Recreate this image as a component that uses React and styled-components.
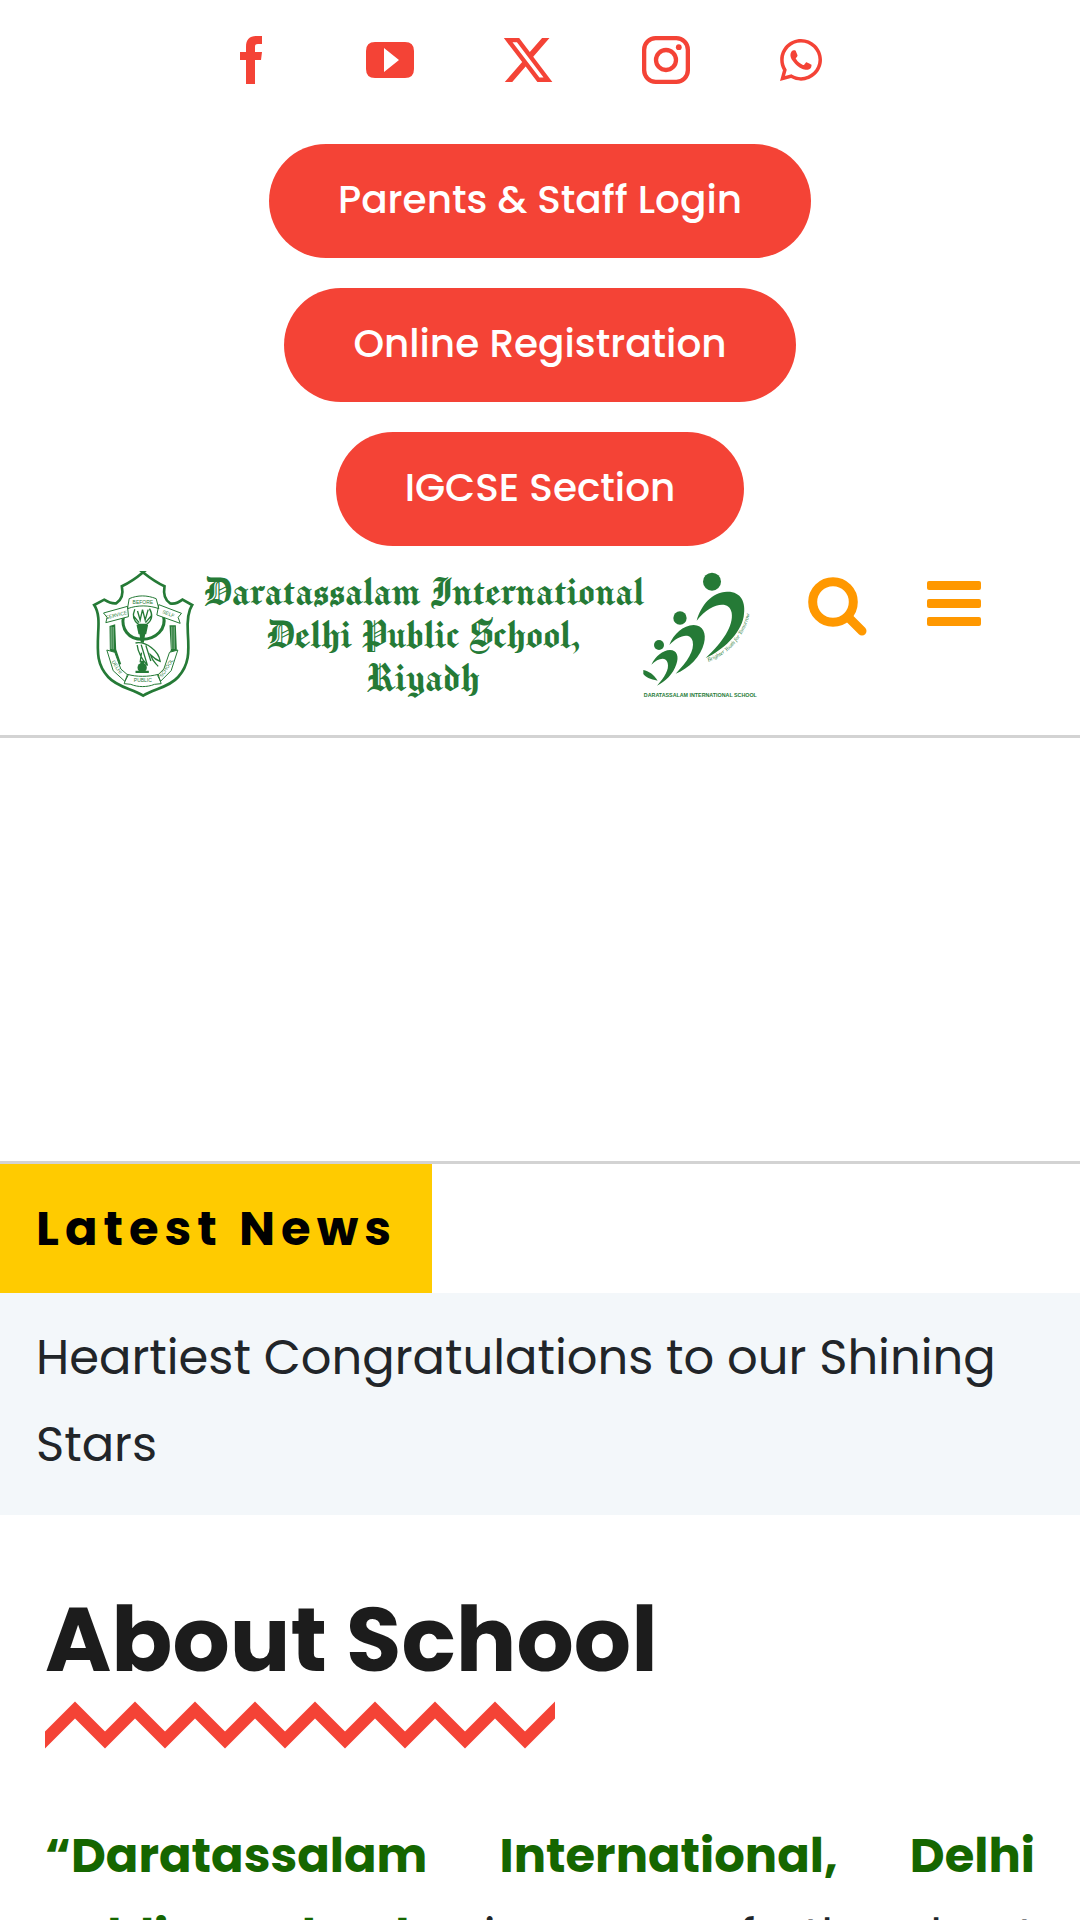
import React from "react";
import styled, { createGlobalStyle } from "styled-components";
import { FaWhatsapp } from "react-icons/fa";
import { FaXTwitter } from "react-icons/fa6";

const RED = "#f44336";
const GREEN = "#257a36";
const ORANGE = "#ff9800";

const GlobalStyle = createGlobalStyle`
  *, *::before, *::after { box-sizing: border-box; }
  html { overflow-x: hidden; }
  body {
    margin: 0;
    background: #fff;
    color: #212529;
    font-family: Poppins, Inter, "Open Sans", sans-serif;
    font-size: 48px;
  }
  a { color: inherit; text-decoration: none; }
  h1, h2, p, ul { margin: 0; padding: 0; }
  svg { display: block; flex: none; }
`;

const TopBar = styled.div`
  display: flex;
  flex-direction: column;
  align-items: center;
  gap: 60px;
  padding-top: 36px;
`;

const SocialList = styled.ul`
  display: flex;
  justify-content: center;
  gap: 90px;
  padding-right: 24px;
  list-style: none;
`;

const SocialLink = styled.a`
  display: flex;
  align-items: center;
  justify-content: ${({ $align = "center" }) => $align};
  width: 48px;
  height: 48px;
  color: ${RED};
`;

const WhatsAppIcon = styled(FaWhatsapp)`
  width: 42px;
  height: 48px;
`;

const ActionList = styled.nav`
  display: flex;
  flex-direction: column;
  align-items: center;
  gap: 30px;
`;

const ActionLink = styled.a`
  padding: 26px 69px 28px;
  border-radius: 57px;
  background: ${RED};
  color: #fff;
  font-size: 39px;
  font-weight: 500;
  line-height: 60px;
`;

const Header = styled.header`
  display: flex;
  align-items: flex-start;
  padding: 24px 99px 35px 92px;
  border-bottom: 3px solid #d3d3d3;
`;

const Brand = styled.a`
  display: flex;
  align-items: flex-start;
  flex: none;
  color: ${GREEN};
`;

const BrandName = styled.span`
  width: 447px;
  padding-left: 8px;
  font-family: "Manufacturing Consent", UnifrakturCook, "Liberation Serif", serif;
  font-size: 44px;
  font-weight: 400;
  line-height: 43px;
  text-align: center;
  white-space: nowrap;
`;

const HeaderTools = styled.div`
  display: flex;
  flex: 1;
  align-items: flex-start;
  justify-content: flex-end;
  gap: 60px;
  padding-top: 7px;
`;

const IconButton = styled.button`
  display: block;
  padding: 0;
  border: 0;
  background: none;
  color: ${ORANGE};
  cursor: pointer;
`;

const Banner = styled.section`
  height: 426px;
  border-bottom: 3px solid #d3d3d3;
`;

const News = styled.section`
  background: #f3f7fa;
`;

const NewsHead = styled.div`
  background: #fff;
`;

const NewsTitle = styled.h2`
  width: 40%;
  padding: 21px 0 21px 36px;
  background: #ffcb00;
  color: #000;
  font-size: 48px;
  font-weight: 700;
  letter-spacing: 6px;
  line-height: 87px;
  white-space: nowrap;
`;

const NewsText = styled.p`
  padding: 21px 36px 27px;
  line-height: 87px;
`;

const About = styled.main`
  padding: 75px 45px;
`;

const AboutTitle = styled.h1`
  color: #1c1c1c;
  font-size: 90px;
  font-weight: 700;
  line-height: 99px;
`;

const ZigZag = styled.svg`
  margin: 12px 0 66px;
`;

const AboutText = styled.p`
  line-height: 81px;
  text-align: justify;

  strong { color: #156600; font-weight: 700; }
`;

function FacebookIcon() {
  return (
    <svg width="24" height="48" viewBox="0 0 24 48" fill="currentColor" aria-hidden="true">
      <path d="M6 48V24H0v-8h6v-5C6 3.500 9.500 0 16 0h6v8h-4c-2.600 0-3 1-3 3v5h7l-1 8h-6v24z" />
    </svg>
  );
}

function YouTubeIcon() {
  return (
    <svg width="48" height="36" viewBox="0 0 48 36" fill="currentColor" aria-hidden="true">
      <path fillRule="evenodd" d="M9 0h30q9 0 9 9v18q0 9-9 9H9q-9 0-9-9V9q0-9 9-9zm9 6v24l15-12z" />
    </svg>
  );
}

function InstagramIcon() {
  return (
    <svg width="48" height="48" viewBox="0 0 48 48" fill="none" stroke="currentColor" strokeWidth="4.300" aria-hidden="true">
      <rect x="2.150" y="2.150" width="43.700" height="43.700" rx="11.500" />
      <circle cx="24" cy="24" r="10" />
      <circle cx="36.800" cy="11.200" r="2.900" fill="currentColor" stroke="none" />
    </svg>
  );
}

function Crest() {
  return (
    <svg width="103" height="128" viewBox="36 28 308 384" fill="none" stroke={GREEN} aria-hidden="true">
      <path strokeWidth="8" d="M189 35C170 51 149 66 125 77c5 24-2 42-17 51-13 2-23-3-36-11L42 133c15 22 14 52 12 84-3 62-3 96 30 132 29 32 73 35 105 56 32-21 77-24 105-56 33-37 33-73 29-132-2-32-2-62 13-84l-29-16c-13 10-25 14-37 11-15-9-21-27-17-51-24-11-45-26-65-42z" />
      <path strokeWidth="9" d="M130 166c-8 39 15 70 56 70s74-31 64-70" />
      <path strokeWidth="3" fill="#fff" d="M147 114c26-11 53-11 81 0l8 30c-30-11-64-11-94 0zM142 137l-72 20 11 13-4 16 68-18zM236 132l68 26-10 12 6 18-70-25z" />
      <path strokeWidth="4" d="M164 146c-10 23-3 35 11 45h25c16-12 20-26 8-47M172 151l8 27 7-31 8 31 9-31M160 166l17 20M213 166l-17 20" />
      <path fill={GREEN} stroke="none" d="M169 192h35l-6 29h-23zM178 221h17l-4 25h-9zM88 196l17-5 3 75 15 44-14 6-20-48zM268 194h19l3 75-21 48-12-7 15-43z" />
      <path strokeWidth="3" d="M93 198v67M99 199v67M275 198v67M282 198v67" stroke="#8ebc96" />
      <path strokeWidth="4" d="M166 247c31-6 70 23 74 55-14-5-20-11-29-20 5 19 14 24 23 35M171 253c3 29 18 47 31 62M183 252l19 63M197 254l15 47M184 276l-4 29" />
      <circle cx="186" cy="321" r="14" fill={GREEN} stroke="none" />
      <path fill={GREEN} stroke="none" d="M181 300h11v16h-11zM166 330h40v7h-40z" />
      <path strokeWidth="3" fill="#fff" d="M80 268l24 7 18 50 22 19-10 18-35-32zM293 268l-25 7-17 50-19 19 9 18 32-32zM142 341c27 8 62 8 92 0l9 28-20 2c-22 9-50 9-71 0l-20-2z" />
      <g fill={GREEN} stroke="none" fontFamily="Liberation Sans, sans-serif" fontSize="15" textAnchor="middle">
        <text x="188" y="130">BEFORE</text>
        <text x="110" y="168" transform="rotate(-14 110 168)">SERVICE</text>
        <text x="263" y="164" transform="rotate(20 263 164)">SELF</text>
        <text x="188" y="364">PUBLIC</text>
        <text x="106" y="322" transform="rotate(57 106 322)">DELHI</text>
        <text x="263" y="325" transform="rotate(-57 263 325)">SCHOOL</text>
      </g>
    </svg>
  );
}

function FiguresLogo() {
  return (
    <svg width="117" height="130" viewBox="637 30 351 390" fill={GREEN} aria-hidden="true">
      <circle cx="847" cy="65" r="27" />
      <circle cx="751" cy="174" r="20" />
      <circle cx="688" cy="255" r="15" />
      <path d="M801 182c13-47 46-86 91-87 42-1 58 31 50 75-10 52-61 99-114 124 52-49 84-97 78-136-7-40-64-29-105 24z" />
      <path d="M719 255c12-33 42-59 73-60 28 0 39 25 31 55-9 39-45 76-85 91 36-36 57-70 51-97-7-29-43-18-70 11z" />
      <path d="M665 314c13-26 34-43 56-44 22 0 27 21 19 43-9 29-34 53-58 64 23-26 37-48 32-68-6-20-29-14-49 5z" />
      <path d="M641 330c16 3 31 13 43 32-22-4-38-11-43-20z" />
      <path id="motto-arc" fill="none" d="M836 305C902 281 956 219 963 139" />
      <text fontFamily="Liberation Serif, serif" fontStyle="italic" fontSize="17">
        <textPath href="#motto-arc">Brighter Youth for Tomorrow</textPath>
      </text>
      <text x="812" y="411" textAnchor="middle" fontFamily="Liberation Sans Narrow, Liberation Sans, sans-serif" fontWeight="700" fontSize="16">
        DARATASSALAM INTERNATIONAL SCHOOL
      </text>
    </svg>
  );
}

function SearchIcon() {
  return (
    <svg width="59" height="59" viewBox="0 0 59 59" fill="none" stroke="currentColor" strokeWidth="9" strokeLinecap="round" aria-hidden="true">
      <circle cx="25" cy="25" r="20.300" />
      <path d="M40 40l14 14" />
    </svg>
  );
}

function MenuIcon() {
  return (
    <svg width="54" height="53" viewBox="0 0 54 53" fill="currentColor" aria-hidden="true">
      <rect y="4" width="54" height="9" rx="2" />
      <rect y="22" width="54" height="9" rx="2" />
      <rect y="40" width="54" height="9" rx="2" />
    </svg>
  );
}

const socials = [
  { name: "Facebook", icon: <FacebookIcon /> },
  { name: "YouTube", icon: <YouTubeIcon /> },
  { name: "X", icon: <FaXTwitter size={54} /> },
  { name: "Instagram", icon: <InstagramIcon /> },
  { name: "WhatsApp", icon: <WhatsAppIcon />, align: "flex-start" },
];

const actions = ["Parents & Staff Login", "Online Registration", "IGCSE Section"];

export default function App() {
  return (
    <>
      <GlobalStyle />
      <TopBar>
        <SocialList>
          {socials.map(({ name, icon, align }) => (
            <li key={name}>
              <SocialLink href="#" aria-label={name} $align={align}>{icon}</SocialLink>
            </li>
          ))}
        </SocialList>
        <ActionList>
          {actions.map((label) => (
            <ActionLink key={label} href="#">{label}</ActionLink>
          ))}
        </ActionList>
      </TopBar>
      <Header>
        <Brand href="#">
          <Crest />
          <BrandName>
            Daratassalam International<br />
            Delhi Public School,<br />
            Riyadh
          </BrandName>
          <FiguresLogo />
        </Brand>
        <HeaderTools>
          <IconButton type="button" aria-label="Search"><SearchIcon /></IconButton>
          <IconButton type="button" aria-label="Menu"><MenuIcon /></IconButton>
        </HeaderTools>
      </Header>
      <Banner />
      <News>
        <NewsHead>
          <NewsTitle>Latest News</NewsTitle>
        </NewsHead>
        <NewsText>Heartiest Congratulations to our Shining Stars</NewsText>
      </News>
      <About>
        <AboutTitle>About School</AboutTitle>
        <ZigZag width="510" height="48" viewBox="0 0 510 48" fill="none" stroke={RED} strokeWidth="12" aria-hidden="true">
          <path d="M-30 9L0 39L30 9L60 39L90 9L120 39L150 9L180 39L210 9L240 39L270 9L300 39L330 9L360 39L390 9L420 39L450 9L480 39L510 9L540 39" />
        </ZigZag>
        <AboutText>
          <strong>“Daratassalam International, Delhi Public School”</strong> is one of the best
          educational institutions.
        </AboutText>
      </About>
    </>
  );
}
